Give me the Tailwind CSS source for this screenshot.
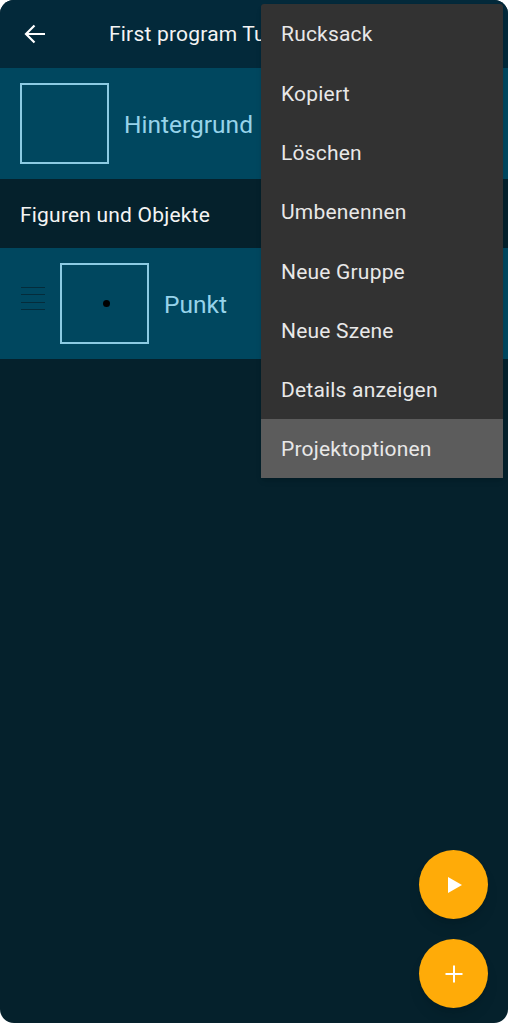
<!DOCTYPE html>
<html lang="en">
<head>
    <meta charset="UTF-8">
    <meta name="viewport" content="width=device-width, initial-scale=1.0">
    <title>First program Tutorial</title>
    <script src="https://cdn.jsdelivr.net/npm/@tailwindcss/browser@4"></script>
</head>
<body class="bg-white font-['Roboto',sans-serif]">
    <div class="relative w-[508px] h-[1023px] rounded-[14px] overflow-hidden bg-[#05212c]">
        <!-- Toolbar -->
        <div class="h-[68px] bg-[#03293a] flex items-center">
            <svg class="ml-[23px] w-[24px] h-[24px]" viewBox="0 0 24 24" fill="none" stroke="white" stroke-width="2.2">
                <path d="M22 12H3M11.5 3.5L3 12l8.5 8.5"/>
            </svg>
            <span class="ml-[62px] mt-[2px] text-[#f4f4f4] text-[21px] tracking-[0.2px] whitespace-nowrap">First program Tutorial</span>
        </div>

        <!-- Background row -->
        <div class="h-[111px] bg-[#00475f] flex items-center pl-[20px]">
            <div class="w-[89px] h-[81px] border-2 border-[#8ccbe3]"></div>
            <span class="ml-[15px] mt-[4px] text-[24.5px] text-[#97d3ea]">Hintergrund</span>
        </div>

        <!-- Section header -->
        <div class="h-[69px] flex items-center pl-[20px] pt-[4px] text-[#f4f4f4] text-[21px] tracking-[0.2px]">Figuren und Objekte</div>

        <!-- Sprite row -->
        <div class="h-[111px] bg-[#00475f] flex items-center pl-[21px]">
            <div class="w-[24px] mb-[10px] flex flex-col gap-[6.6px]">
                <div class="h-px bg-[#05212c]/70"></div>
                <div class="h-px bg-[#05212c]/70"></div>
                <div class="h-px bg-[#05212c]/70"></div>
                <div class="h-px bg-[#05212c]/70"></div>
            </div>
            <div class="ml-[15px] w-[89px] h-[81px] border-2 border-[#8ccbe3] flex items-center justify-center">
                <div class="ml-[4px] w-[7px] h-[7px] rounded-full bg-black"></div>
            </div>
            <span class="ml-[15px] mt-[4px] text-[24.5px] text-[#97d3ea]">Punkt</span>
        </div>

        <!-- Overflow menu -->
        <div class="absolute left-[261px] top-[4px] w-[242px] bg-[#323232] rounded-t-[3px] overflow-hidden text-[#e8e8e8] text-[21px] tracking-[0.2px] shadow-md">
            <div class="h-[59.3px] flex items-center pl-[20px] pt-[3px]">Rucksack</div>
            <div class="h-[59.3px] flex items-center pl-[20px] pt-[3px]">Kopiert</div>
            <div class="h-[59.3px] flex items-center pl-[20px] pt-[3px]">Löschen</div>
            <div class="h-[59.3px] flex items-center pl-[20px] pt-[3px]">Umbenennen</div>
            <div class="h-[59.3px] flex items-center pl-[20px] pt-[3px]">Neue Gruppe</div>
            <div class="h-[59.3px] flex items-center pl-[20px] pt-[3px]">Neue Szene</div>
            <div class="h-[59.3px] flex items-center pl-[20px] pt-[3px]">Details anzeigen</div>
            <div class="h-[59px] flex items-center pl-[20px] pt-[3px] bg-[#5c5c5c]">Projektoptionen</div>
        </div>

        <!-- Floating buttons -->
        <div class="absolute left-[419px] top-[850px] flex flex-col gap-[20px]">
            <div class="w-[69px] h-[69px] rounded-full bg-[#ffab08] flex items-center justify-center shadow-lg">
                <svg class="w-[18px] h-[18px]" viewBox="0 0 18 18" fill="white"><path d="M3 1l14 8-14 8z"/></svg>
            </div>
            <div class="w-[69px] h-[69px] rounded-full bg-[#ffab08] flex items-center justify-center shadow-lg">
                <svg class="w-[18px] h-[18px]" viewBox="0 0 18 18" stroke="white" stroke-width="2"><path d="M9 0.5v17M0.5 9h17"/></svg>
            </div>
        </div>
    </div>
</body>
</html>
